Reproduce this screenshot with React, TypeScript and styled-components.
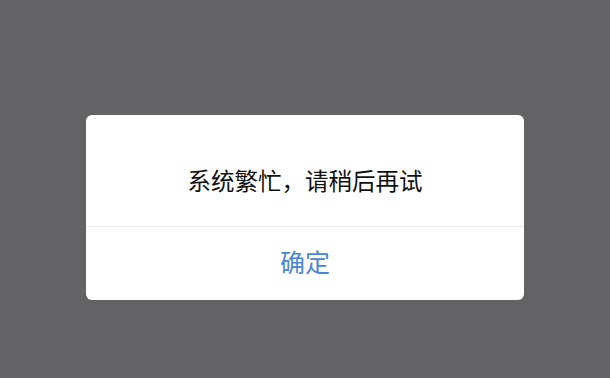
import React from 'react';
import styled, {createGlobalStyle} from "styled-components";

const GlobalStyle = createGlobalStyle`
    html, body {
        margin: 0;
        padding: 0;
    }
    body {
        font-family: "Noto Sans CJK SC", "Noto Sans", sans-serif;
    }
`

type AlertPropsType = {
    message: string
    confirmText: string
}

const Alert = ({message, confirmText}: AlertPropsType) => {
    return (
        <Dialog>
            <Message>{message}</Message>
            <Footer>
                <ConfirmButton>{confirmText}</ConfirmButton>
            </Footer>
        </Dialog>
    );
};

export default function App() {
    return (
        <>
            <GlobalStyle/>
            <Overlay>
                <Alert message="系统繁忙，请稍后再试" confirmText="确定"/>
            </Overlay>
        </>
    );
}

const Overlay = styled.div`
    width: 610px;
    height: 378px;
    background: #636365;
    display: flex;
    justify-content: center;
    align-items: flex-start;
    padding-top: 115px;
    box-sizing: border-box;
`
const Dialog = styled.div`
    width: 438px;
    background: #ffffff;
    border-radius: 6px;
    overflow: hidden;
    display: flex;
    flex-direction: column;
`
const Message = styled.div`
    height: 111px;
    display: flex;
    align-items: center;
    justify-content: center;
    font-size: 23.5px;
    color: #111111;
    padding-top: 18px;
    box-sizing: border-box;
`
const Footer = styled.div`
    height: 74px;
    border-top: 1px solid #ebebeb;
    display: flex;
    align-items: center;
    justify-content: center;
    padding-bottom: 6px;
    box-sizing: border-box;
`
const ConfirmButton = styled.button`
    border: none;
    background: none;
    padding: 0;
    font-family: inherit;
    font-size: 25px;
    color: #4a86d6;
    cursor: pointer;
`
